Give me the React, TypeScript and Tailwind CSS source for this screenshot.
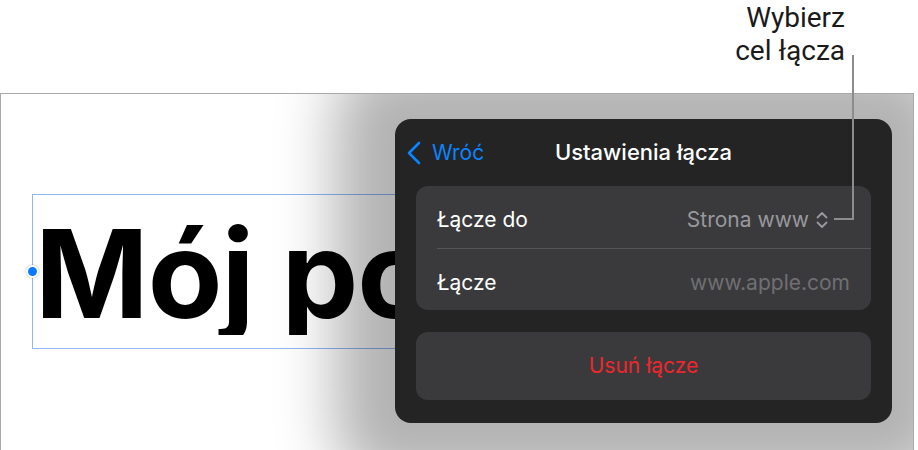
import React from 'react';

function BackChevron() {
  return (
    <svg width="16" height="24" viewBox="0 0 16 24" fill="none">
      <path d="M13 2 L3 12 L13 22" stroke="#0a84ff" strokeWidth="2.6" strokeLinecap="round" strokeLinejoin="round" />
    </svg>
  );
}

function UpDownIcon() {
  return (
    <svg width="14" height="18" viewBox="0 0 14 18" fill="none">
      <path d="M2.5 6.5 L7 2 L11.5 6.5" stroke="#98989d" strokeWidth="1.8" strokeLinecap="round" strokeLinejoin="round" />
      <path d="M2.5 11.5 L7 16 L11.5 11.5" stroke="#98989d" strokeWidth="1.8" strokeLinecap="round" strokeLinejoin="round" />
    </svg>
  );
}

export default function App() {
  return (
    <div className="relative w-[918px] h-[450px] overflow-hidden bg-white" style={{ fontFamily: 'Inter, "Noto Sans", sans-serif' }}>
      {/* Callout */}
      <div className="h-[93px] flex justify-end pr-[73px] pt-[1px]">
        <div className="text-right text-[28px] leading-[33px] text-[#1a1a1a]" style={{ fontFamily: 'Roboto, "Liberation Sans", sans-serif' }}>
          <div>Wybierz</div>
          <div>cel łącza</div>
        </div>
      </div>

      {/* Slide area */}
      <div className="relative w-[914px] h-[380px] border border-[#a9a9a9] bg-white overflow-hidden">
        {/* Text box on canvas */}
        <div className="absolute left-[31px] top-[100px] w-[520px] h-[155px] border border-[#8fb6f7]">
          <div className="w-[362px] overflow-hidden">
            <div className="pl-[2px] pt-[18px] text-[122px] leading-none font-bold text-black tracking-[-1px] whitespace-nowrap">
              Mój po
            </div>
          </div>
          <div className="absolute -left-[7px] top-[70px] w-[13px] h-[13px] rounded-full bg-[#0a7aff] border-2 border-white shadow-[0_0_2px_rgba(0,0,0,0.35)]" />
        </div>

        {/* Popover */}
        <div className="absolute left-[394px] top-[25px] w-[497px] h-[304px] rounded-[16px] bg-[#242424] shadow-[0_0_60px_60px_rgba(0,0,0,0.3)] px-[21px] flex flex-col">
          <div className="relative h-[67px] flex items-center">
            <div className="flex items-center gap-[10px] -ml-[10px] text-[#0a84ff] text-[21px]">
              <BackChevron />
              <span>Wróć</span>
            </div>
            <div className="absolute left-[110px] right-[110px] top-0 bottom-0 flex items-center justify-center text-white text-[22px] font-medium">
              Ustawienia łącza
            </div>
          </div>

          <div className="rounded-[12px] bg-[#3a3a3c] flex flex-col pl-[21px]">
            <div className="h-[63px] pt-[5px] flex items-center justify-between pr-[42px] border-b border-[#555558]">
              <span className="text-white text-[21px]">Łącze do</span>
              <div className="flex items-center gap-[6px] text-[#98989d] text-[21px]">
                <span>Strona www</span>
                <UpDownIcon />
              </div>
            </div>
            <div className="h-[61px] pt-[6px] flex items-center justify-between pr-[21px]">
              <span className="text-white text-[21px]">Łącze</span>
              <span className="text-[#6f6f73] text-[21px]">www.apple.com</span>
            </div>
          </div>

          <div className="mt-[22px] h-[68px] rounded-[12px] bg-[#3a3a3c] flex items-center justify-center text-[#f0262d] text-[21px]">
            Usuń łącze
          </div>
        </div>
      </div>

      {/* Callout leader line */}
      <svg className="absolute left-0 top-0 pointer-events-none" width="918" height="450">
        <path d="M853 55 L853 219 L834 219" stroke="#8c8c8c" strokeWidth="2" fill="none" />
      </svg>
    </div>
  );
}
